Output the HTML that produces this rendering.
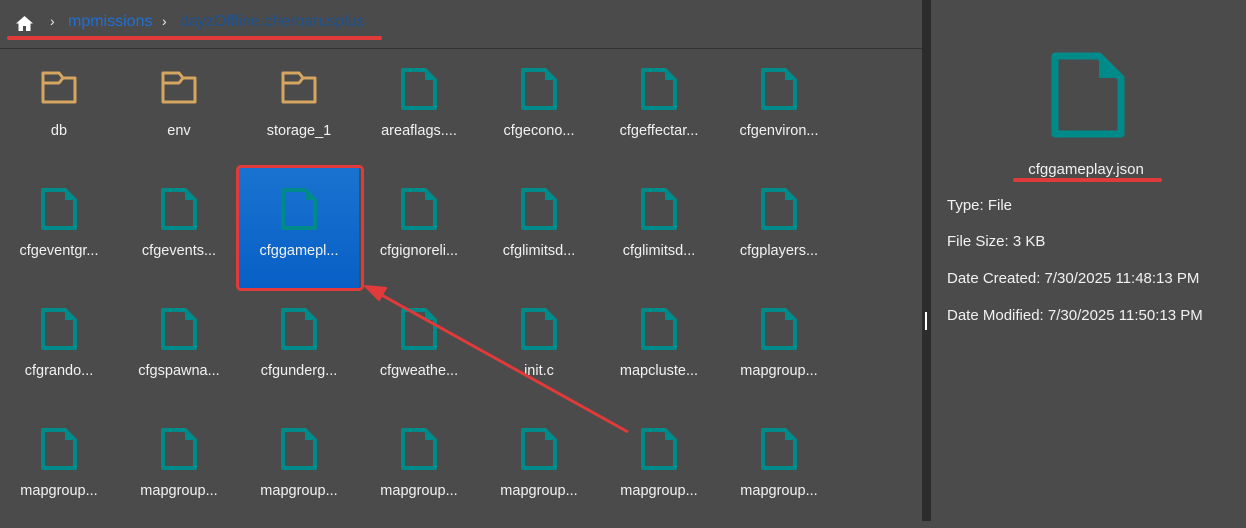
<!DOCTYPE html>
<html><head><meta charset="utf-8"><style>
*{margin:0;padding:0;box-sizing:border-box}
html,body{width:1246px;height:521px}
body{background:#4b4b4b;font-family:"Liberation Sans","DejaVu Sans",sans-serif;color:#f2f2f2;position:relative;overflow:hidden}
.it{position:absolute;width:120px;height:120px}
.it svg{position:absolute;left:42px;top:20px}
.it .l{position:absolute;left:0;width:120px;top:73px;text-align:center;font-size:14.5px;line-height:20px;white-space:nowrap}
.sel{background:linear-gradient(#1a72d0,#0860c6)}
.p{position:absolute;left:947px;font-size:15px;line-height:20px}
</style></head><body>
<div style="position:absolute;left:0;top:48px;width:922px;height:1px;background:#333"></div>
<svg style="position:absolute;left:16px;top:16px" width="17" height="15" viewBox="0 0 17 15"><path d="M8.5 0L0 7.5h2.5V15h4.5v-5h3v5h4.5V7.5H17z" fill="#fff"/></svg>
<div style="position:absolute;left:50px;top:13px;font-size:14px;color:#eee">›</div>
<div style="position:absolute;left:68px;top:13px;font-size:16px;color:#1e6fd6">mpmissions</div>
<div style="position:absolute;left:162px;top:13px;font-size:14px;color:#eee">›</div>
<div style="position:absolute;left:180px;top:13px;font-size:16px;color:#1d528f">dayzOffline.chernarusplus</div>
<div style="position:absolute;left:7px;top:36px;width:375px;height:4px;border-radius:2px;background:#e03a3a"></div>
<div style="position:absolute;left:922px;top:0;width:9px;height:521px;background:#2c2c2c"></div>
<div style="position:absolute;left:925px;top:312px;width:2px;height:18px;background:#fff"></div>

<div class="it" style="left:-1px;top:48px"><svg width="36" height="42" viewBox="0 0 36 42"><path d="M2 5H18L22 10H34V34H2Z M2 15H18L22 10" fill="none" stroke="#d4a660" stroke-width="3" stroke-linejoin="round"/></svg><div class="l">db</div></div>
<div class="it" style="left:119px;top:48px"><svg width="36" height="42" viewBox="0 0 36 42"><path d="M2 5H18L22 10H34V34H2Z M2 15H18L22 10" fill="none" stroke="#d4a660" stroke-width="3" stroke-linejoin="round"/></svg><div class="l">env</div></div>
<div class="it" style="left:239px;top:48px"><svg width="36" height="42" viewBox="0 0 36 42"><path d="M2 5H18L22 10H34V34H2Z M2 15H18L22 10" fill="none" stroke="#d4a660" stroke-width="3" stroke-linejoin="round"/></svg><div class="l">storage_1</div></div>
<div class="it" style="left:359px;top:48px"><svg width="36" height="42" viewBox="0 0 36 42"><path d="M2 2H24L34 12V40H2Z" fill="none" stroke="#008b8b" stroke-width="4" stroke-linejoin="round"/><path d="M24 2L34 12H24Z" fill="#008b8b"/></svg><div class="l">areaflags....</div></div>
<div class="it" style="left:479px;top:48px"><svg width="36" height="42" viewBox="0 0 36 42"><path d="M2 2H24L34 12V40H2Z" fill="none" stroke="#008b8b" stroke-width="4" stroke-linejoin="round"/><path d="M24 2L34 12H24Z" fill="#008b8b"/></svg><div class="l">cfgecono...</div></div>
<div class="it" style="left:599px;top:48px"><svg width="36" height="42" viewBox="0 0 36 42"><path d="M2 2H24L34 12V40H2Z" fill="none" stroke="#008b8b" stroke-width="4" stroke-linejoin="round"/><path d="M24 2L34 12H24Z" fill="#008b8b"/></svg><div class="l">cfgeffectar...</div></div>
<div class="it" style="left:719px;top:48px"><svg width="36" height="42" viewBox="0 0 36 42"><path d="M2 2H24L34 12V40H2Z" fill="none" stroke="#008b8b" stroke-width="4" stroke-linejoin="round"/><path d="M24 2L34 12H24Z" fill="#008b8b"/></svg><div class="l">cfgenviron...</div></div>

<div class="it" style="left:-1px;top:168px"><svg width="36" height="42" viewBox="0 0 36 42"><path d="M2 2H24L34 12V40H2Z" fill="none" stroke="#008b8b" stroke-width="4" stroke-linejoin="round"/><path d="M24 2L34 12H24Z" fill="#008b8b"/></svg><div class="l">cfgeventgr...</div></div>
<div class="it" style="left:119px;top:168px"><svg width="36" height="42" viewBox="0 0 36 42"><path d="M2 2H24L34 12V40H2Z" fill="none" stroke="#008b8b" stroke-width="4" stroke-linejoin="round"/><path d="M24 2L34 12H24Z" fill="#008b8b"/></svg><div class="l">cfgevents...</div></div>
<div class="it sel" style="left:239px;top:168px"><svg width="36" height="42" viewBox="0 0 36 42"><path d="M2 2H24L34 12V40H2Z" fill="none" stroke="#008b8b" stroke-width="4" stroke-linejoin="round"/><path d="M24 2L34 12H24Z" fill="#008b8b"/></svg><div class="l">cfggamepl...</div></div>
<div class="it" style="left:359px;top:168px"><svg width="36" height="42" viewBox="0 0 36 42"><path d="M2 2H24L34 12V40H2Z" fill="none" stroke="#008b8b" stroke-width="4" stroke-linejoin="round"/><path d="M24 2L34 12H24Z" fill="#008b8b"/></svg><div class="l">cfgignoreli...</div></div>
<div class="it" style="left:479px;top:168px"><svg width="36" height="42" viewBox="0 0 36 42"><path d="M2 2H24L34 12V40H2Z" fill="none" stroke="#008b8b" stroke-width="4" stroke-linejoin="round"/><path d="M24 2L34 12H24Z" fill="#008b8b"/></svg><div class="l">cfglimitsd...</div></div>
<div class="it" style="left:599px;top:168px"><svg width="36" height="42" viewBox="0 0 36 42"><path d="M2 2H24L34 12V40H2Z" fill="none" stroke="#008b8b" stroke-width="4" stroke-linejoin="round"/><path d="M24 2L34 12H24Z" fill="#008b8b"/></svg><div class="l">cfglimitsd...</div></div>
<div class="it" style="left:719px;top:168px"><svg width="36" height="42" viewBox="0 0 36 42"><path d="M2 2H24L34 12V40H2Z" fill="none" stroke="#008b8b" stroke-width="4" stroke-linejoin="round"/><path d="M24 2L34 12H24Z" fill="#008b8b"/></svg><div class="l">cfgplayers...</div></div>

<div class="it" style="left:-1px;top:288px"><svg width="36" height="42" viewBox="0 0 36 42"><path d="M2 2H24L34 12V40H2Z" fill="none" stroke="#008b8b" stroke-width="4" stroke-linejoin="round"/><path d="M24 2L34 12H24Z" fill="#008b8b"/></svg><div class="l">cfgrando...</div></div>
<div class="it" style="left:119px;top:288px"><svg width="36" height="42" viewBox="0 0 36 42"><path d="M2 2H24L34 12V40H2Z" fill="none" stroke="#008b8b" stroke-width="4" stroke-linejoin="round"/><path d="M24 2L34 12H24Z" fill="#008b8b"/></svg><div class="l">cfgspawna...</div></div>
<div class="it" style="left:239px;top:288px"><svg width="36" height="42" viewBox="0 0 36 42"><path d="M2 2H24L34 12V40H2Z" fill="none" stroke="#008b8b" stroke-width="4" stroke-linejoin="round"/><path d="M24 2L34 12H24Z" fill="#008b8b"/></svg><div class="l">cfgunderg...</div></div>
<div class="it" style="left:359px;top:288px"><svg width="36" height="42" viewBox="0 0 36 42"><path d="M2 2H24L34 12V40H2Z" fill="none" stroke="#008b8b" stroke-width="4" stroke-linejoin="round"/><path d="M24 2L34 12H24Z" fill="#008b8b"/></svg><div class="l">cfgweathe...</div></div>
<div class="it" style="left:479px;top:288px"><svg width="36" height="42" viewBox="0 0 36 42"><path d="M2 2H24L34 12V40H2Z" fill="none" stroke="#008b8b" stroke-width="4" stroke-linejoin="round"/><path d="M24 2L34 12H24Z" fill="#008b8b"/></svg><div class="l">init.c</div></div>
<div class="it" style="left:599px;top:288px"><svg width="36" height="42" viewBox="0 0 36 42"><path d="M2 2H24L34 12V40H2Z" fill="none" stroke="#008b8b" stroke-width="4" stroke-linejoin="round"/><path d="M24 2L34 12H24Z" fill="#008b8b"/></svg><div class="l">mapcluste...</div></div>
<div class="it" style="left:719px;top:288px"><svg width="36" height="42" viewBox="0 0 36 42"><path d="M2 2H24L34 12V40H2Z" fill="none" stroke="#008b8b" stroke-width="4" stroke-linejoin="round"/><path d="M24 2L34 12H24Z" fill="#008b8b"/></svg><div class="l">mapgroup...</div></div>

<div class="it" style="left:-1px;top:408px"><svg width="36" height="42" viewBox="0 0 36 42"><path d="M2 2H24L34 12V40H2Z" fill="none" stroke="#008b8b" stroke-width="4" stroke-linejoin="round"/><path d="M24 2L34 12H24Z" fill="#008b8b"/></svg><div class="l">mapgroup...</div></div>
<div class="it" style="left:119px;top:408px"><svg width="36" height="42" viewBox="0 0 36 42"><path d="M2 2H24L34 12V40H2Z" fill="none" stroke="#008b8b" stroke-width="4" stroke-linejoin="round"/><path d="M24 2L34 12H24Z" fill="#008b8b"/></svg><div class="l">mapgroup...</div></div>
<div class="it" style="left:239px;top:408px"><svg width="36" height="42" viewBox="0 0 36 42"><path d="M2 2H24L34 12V40H2Z" fill="none" stroke="#008b8b" stroke-width="4" stroke-linejoin="round"/><path d="M24 2L34 12H24Z" fill="#008b8b"/></svg><div class="l">mapgroup...</div></div>
<div class="it" style="left:359px;top:408px"><svg width="36" height="42" viewBox="0 0 36 42"><path d="M2 2H24L34 12V40H2Z" fill="none" stroke="#008b8b" stroke-width="4" stroke-linejoin="round"/><path d="M24 2L34 12H24Z" fill="#008b8b"/></svg><div class="l">mapgroup...</div></div>
<div class="it" style="left:479px;top:408px"><svg width="36" height="42" viewBox="0 0 36 42"><path d="M2 2H24L34 12V40H2Z" fill="none" stroke="#008b8b" stroke-width="4" stroke-linejoin="round"/><path d="M24 2L34 12H24Z" fill="#008b8b"/></svg><div class="l">mapgroup...</div></div>
<div class="it" style="left:599px;top:408px"><svg width="36" height="42" viewBox="0 0 36 42"><path d="M2 2H24L34 12V40H2Z" fill="none" stroke="#008b8b" stroke-width="4" stroke-linejoin="round"/><path d="M24 2L34 12H24Z" fill="#008b8b"/></svg><div class="l">mapgroup...</div></div>
<div class="it" style="left:719px;top:408px"><svg width="36" height="42" viewBox="0 0 36 42"><path d="M2 2H24L34 12V40H2Z" fill="none" stroke="#008b8b" stroke-width="4" stroke-linejoin="round"/><path d="M24 2L34 12H24Z" fill="#008b8b"/></svg><div class="l">mapgroup...</div></div>

<div style="position:absolute;left:236px;top:165px;width:128px;height:126px;border:3px solid #e03a3a;border-radius:5px"></div>
<svg style="position:absolute;left:0;top:0" width="1246" height="521"><line x1="628" y1="432" x2="378" y2="293" stroke="#e03a3a" stroke-width="3"/><path d="M365 286L386 288L379 300Z" fill="#e03a3a" stroke="#e03a3a" stroke-width="2" stroke-linejoin="round"/></svg>

<svg style="position:absolute;left:1051px;top:52px" width="74" height="86" viewBox="0 0 74 86"><path d="M4 4H48L70 26V82H4Z" fill="none" stroke="#008b8b" stroke-width="7" stroke-linejoin="round"/><path d="M48 4L70 26H48Z" fill="#008b8b"/></svg>
<div style="position:absolute;left:986px;width:200px;top:160px;text-align:center;font-size:15px;line-height:20px">cfggameplay.json</div>
<div style="position:absolute;left:1013px;top:178px;width:149px;height:4px;border-radius:2px;background:#e03a3a"></div>
<div class="p" style="top:196px">Type: File</div>
<div class="p" style="top:232px">File Size: 3 KB</div>
<div class="p" style="top:269px">Date Created: 7/30/2025 11:48:13 PM</div>
<div class="p" style="top:306px">Date Modified: 7/30/2025 11:50:13 PM</div>
</body></html>
